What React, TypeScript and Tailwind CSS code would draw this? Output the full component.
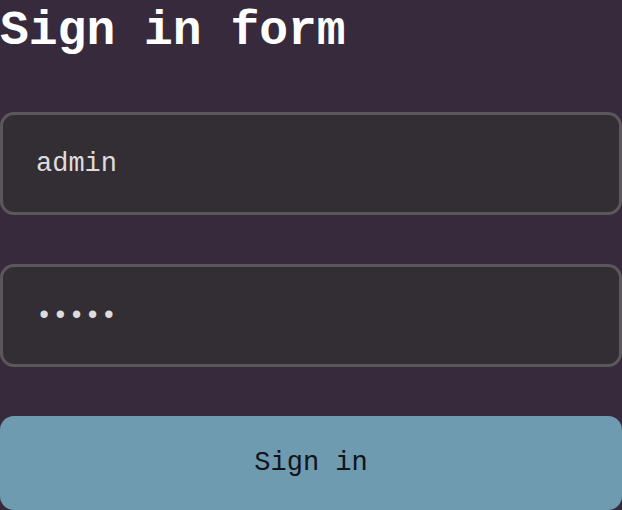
export default function App() {
  return (
    <div className="min-h-[510px] w-[622px] bg-[#372a3c] font-['Liberation_Mono',monospace] overflow-hidden">
      <h1 className="text-[48px] leading-[62px] font-bold text-white">Sign in form</h1>
      <form className="mt-[50px] flex flex-col gap-[49px]" onSubmit={(e) => e.preventDefault()}>
        <input
          type="text"
          defaultValue="admin"
          className="h-[103px] w-full rounded-[14px] border-[3px] border-[#5a585b] bg-[#322e33] px-[33px] text-[27px] text-[#dedbdf] outline-none"
        />
        <input
          type="password"
          defaultValue="admin"
          className="h-[103px] w-full rounded-[14px] border-[3px] border-[#5a585b] bg-[#322e33] px-[33px] text-[27px] text-[#dedbdf] outline-none"
        />
        <button
          type="submit"
          className="h-[94px] w-full rounded-[14px] bg-[#6e9bb0] text-[27px] text-[#111418]"
        >
          Sign in
        </button>
      </form>
    </div>
  );
}
